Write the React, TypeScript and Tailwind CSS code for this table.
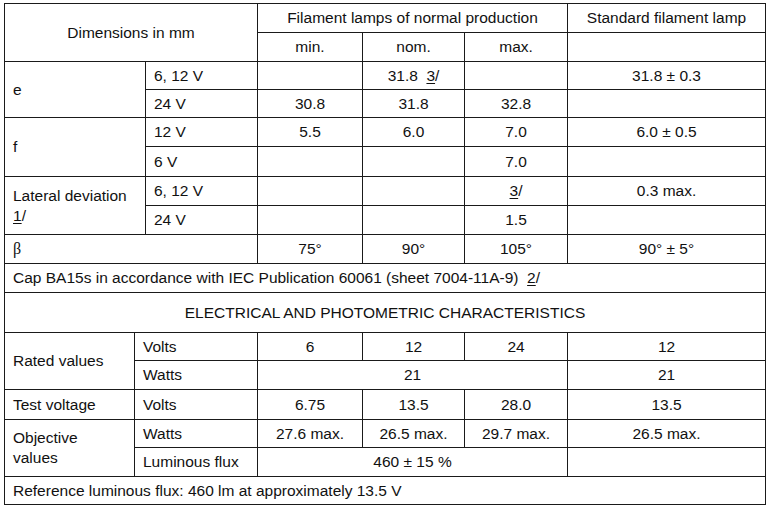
const cell = 'border border-[#1a1a1a] px-2 align-middle';
const c = `${cell} text-center`;
const l = `${cell} text-left`;

function Note({ n }: { n: string }) {
  return (
    <span>
      <span className="underline underline-offset-2">{n}</span>/
    </span>
  );
}

export default function App() {
  return (
    <div className="min-h-screen w-full bg-white pl-[4px] pt-[3px] font-['Liberation_Sans',Arial,sans-serif] text-[15.5px] leading-[18px] text-[#111]">
      <table className="w-[761px] table-fixed border-collapse">
        <colgroup>
          <col className="w-[130px]" />
          <col className="w-[11px]" />
          <col className="w-[112px]" />
          <col className="w-[105px]" />
          <col className="w-[102px]" />
          <col className="w-[103px]" />
          <col className="w-[198px]" />
        </colgroup>
        <tbody>
          <tr className="h-[29px]">
            <td className={c} colSpan={3} rowSpan={2}>Dimensions in mm</td>
            <td className={c} colSpan={3}>Filament lamps of normal production</td>
            <td className={c}>Standard filament lamp</td>
          </tr>
          <tr className="h-[29px]">
            <td className={c}>min.</td>
            <td className={c}>nom.</td>
            <td className={c}>max.</td>
            <td className={c}></td>
          </tr>

          {/* e */}
          <tr className="h-[28px]">
            <td className={l} colSpan={2} rowSpan={2}>e</td>
            <td className={l}>6, 12 V</td>
            <td className={c}></td>
            <td className={c}>31.8&nbsp; <Note n="3" /></td>
            <td className={c}></td>
            <td className={c}>31.8 ± 0.3</td>
          </tr>
          <tr className="h-[28px]">
            <td className={l}>24 V</td>
            <td className={c}>30.8</td>
            <td className={c}>31.8</td>
            <td className={c}>32.8</td>
            <td className={c}></td>
          </tr>

          {/* f */}
          <tr className="h-[29px]">
            <td className={l} colSpan={2} rowSpan={2}>f</td>
            <td className={l}>12 V</td>
            <td className={c}>5.5</td>
            <td className={c}>6.0</td>
            <td className={c}>7.0</td>
            <td className={c}>6.0 ± 0.5</td>
          </tr>
          <tr className="h-[30px]">
            <td className={l}>6 V</td>
            <td className={c}></td>
            <td className={c}></td>
            <td className={c}>7.0</td>
            <td className={c}></td>
          </tr>

          {/* lateral deviation */}
          <tr className="h-[29px]">
            <td className={`${l} leading-[20px]`} colSpan={2} rowSpan={2}>
              Lateral deviation
              <br />
              <Note n="1" />
            </td>
            <td className={l}>6, 12 V</td>
            <td className={c}></td>
            <td className={c}></td>
            <td className={c}><Note n="3" /></td>
            <td className={c}>0.3 max.</td>
          </tr>
          <tr className="h-[29px]">
            <td className={l}>24 V</td>
            <td className={c}></td>
            <td className={c}></td>
            <td className={c}>1.5</td>
            <td className={c}></td>
          </tr>

          <tr className="h-[29px]">
            <td className={`${l} font-['Liberation_Serif',serif] text-[16px]`} colSpan={3}>β</td>
            <td className={c}>75°</td>
            <td className={c}>90°</td>
            <td className={c}>105°</td>
            <td className={c}>90° ± 5°</td>
          </tr>
          <tr className="h-[29px]">
            <td className={l} colSpan={7}>
              Cap BA15s in accordance with IEC Publication 60061 (sheet 7004-11A-9)&nbsp; <Note n="2" />
            </td>
          </tr>
          <tr className="h-[40px]">
            <td className={c} colSpan={7}>ELECTRICAL AND PHOTOMETRIC CHARACTERISTICS</td>
          </tr>

          {/* rated values */}
          <tr className="h-[28px]">
            <td className={l} rowSpan={2}>Rated values</td>
            <td className={l} colSpan={2}>Volts</td>
            <td className={c}>6</td>
            <td className={c}>12</td>
            <td className={c}>24</td>
            <td className={c}>12</td>
          </tr>
          <tr className="h-[29px]">
            <td className={l} colSpan={2}>Watts</td>
            <td className={c} colSpan={3}>21</td>
            <td className={c}>21</td>
          </tr>

          <tr className="h-[30px]">
            <td className={l}>Test voltage</td>
            <td className={l} colSpan={2}>Volts</td>
            <td className={c}>6.75</td>
            <td className={c}>13.5</td>
            <td className={c}>28.0</td>
            <td className={c}>13.5</td>
          </tr>

          {/* objective values */}
          <tr className="h-[28px]">
            <td className={`${l} leading-[20px]`} rowSpan={2}>
              Objective
              <br />
              values
            </td>
            <td className={l} colSpan={2}>Watts</td>
            <td className={c}>27.6 max.</td>
            <td className={c}>26.5 max.</td>
            <td className={c}>29.7 max.</td>
            <td className={c}>26.5 max.</td>
          </tr>
          <tr className="h-[29px]">
            <td className={l} colSpan={2}>Luminous flux</td>
            <td className={c} colSpan={3}>460 ± 15 %</td>
            <td className={c}></td>
          </tr>

          <tr className="h-[28px]">
            <td className={l} colSpan={7}>Reference luminous flux: 460 lm at approximately 13.5 V</td>
          </tr>
        </tbody>
      </table>
    </div>
  );
}
